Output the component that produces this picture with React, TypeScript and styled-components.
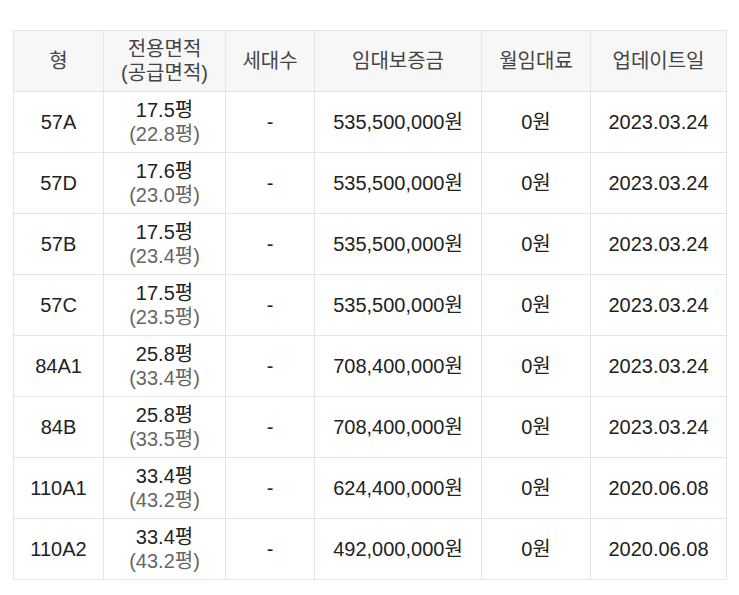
import styled, { createGlobalStyle } from "styled-components";

const GlobalStyle = createGlobalStyle`
  body {
    margin: 0;
    background: #fff;
    font-family: "Liberation Sans", "Noto Sans CJK KR", sans-serif;
  }
`;

const units = [
  { type: "57A", area: "17.5", supply: "22.8", deposit: "535,500,000", date: "2023.03.24" },
  { type: "57D", area: "17.6", supply: "23.0", deposit: "535,500,000", date: "2023.03.24" },
  { type: "57B", area: "17.5", supply: "23.4", deposit: "535,500,000", date: "2023.03.24" },
  { type: "57C", area: "17.5", supply: "23.5", deposit: "535,500,000", date: "2023.03.24" },
  { type: "84A1", area: "25.8", supply: "33.4", deposit: "708,400,000", date: "2023.03.24" },
  { type: "84B", area: "25.8", supply: "33.5", deposit: "708,400,000", date: "2023.03.24" },
  { type: "110A1", area: "33.4", supply: "43.2", deposit: "624,400,000", date: "2020.06.08" },
  { type: "110A2", area: "33.4", supply: "43.2", deposit: "492,000,000", date: "2020.06.08" },
];

const columns = [90, 122, 89, 167, 109, 136];

export default function App() {
  return (
    <>
      <GlobalStyle />
      <Wrapper>
        <Table>
          <colgroup>
            {columns.map((w, i) => (
              <col key={i} style={{ width: w }} />
            ))}
          </colgroup>
          <thead>
            <tr>
              <Th>형</Th>
              <Th>
                전용면적
                <br />
                (공급면적)
              </Th>
              <Th>세대수</Th>
              <Th>임대보증금</Th>
              <Th>월임대료</Th>
              <Th>업데이트일</Th>
            </tr>
          </thead>
          <tbody>
            {units.map((u) => (
              <tr key={u.type}>
                <Td>{u.type}</Td>
                <Td>
                  {u.area}평
                  <br />
                  <Sub>({u.supply}평)</Sub>
                </Td>
                <Td>-</Td>
                <Td>{u.deposit}원</Td>
                <Td>0원</Td>
                <Td>{u.date}</Td>
              </tr>
            ))}
          </tbody>
        </Table>
      </Wrapper>
    </>
  );
}

const Wrapper = styled.div`
  padding: 30px 13px;
`;

const Table = styled.table`
  width: 714px;
  table-layout: fixed;
  border-collapse: collapse;
  border: 1px solid #e4e4e4;
`;

const Th = styled.th`
  height: 60px;
  padding: 0;
  background: #f7f7f7;
  border: 1px solid #e4e4e4;
  color: #444;
  font-size: 20px;
  font-weight: 400;
  line-height: 24px;
  text-align: center;
  vertical-align: middle;
`;

const Td = styled.td`
  height: 60px;
  padding: 0;
  border: 1px solid #e4e4e4;
  color: #222;
  font-size: 20px;
  line-height: 24px;
  text-align: center;
  vertical-align: middle;
`;

const Sub = styled.span`
  color: #666;
`;
